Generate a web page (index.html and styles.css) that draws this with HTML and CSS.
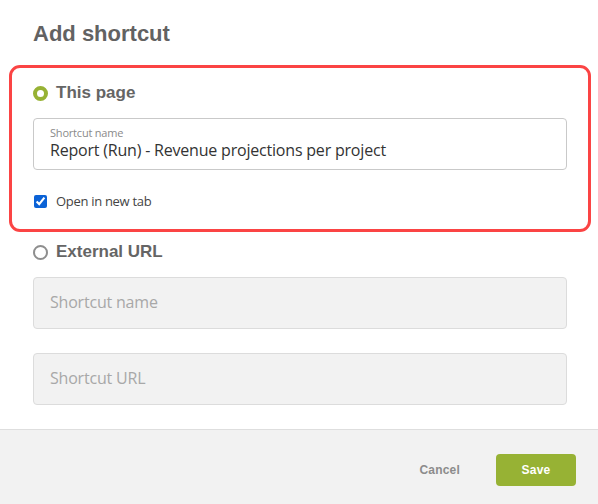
FILE: index.html
```html
<!DOCTYPE html>
<html lang="en">
<head>
<meta charset="utf-8">
<title>Add shortcut</title>
<link rel="stylesheet" href="styles.css">
</head>
<body>
<div class="dialog">
  <div class="dialog-body">
    <h1 class="title">Add shortcut</h1>

    <div class="option option-active">
      <div class="radio-row">
        <span class="radio radio-on"></span>
        <span class="radio-label">This page</span>
      </div>
      <div class="field">
        <span class="field-label">Shortcut name</span>
        <span class="field-value">Report (Run) - Revenue projections per project</span>
      </div>
      <label class="check-row">
        <input type="checkbox" class="check" checked>
        <span class="check-label">Open in new tab</span>
      </label>
    </div>

    <div class="option">
      <div class="radio-row">
        <span class="radio"></span>
        <span class="radio-label">External URL</span>
      </div>
      <div class="field field-disabled">
        <span class="placeholder">Shortcut name</span>
      </div>
      <div class="field field-disabled field-gap">
        <span class="placeholder">Shortcut URL</span>
      </div>
    </div>
  </div>

  <div class="dialog-footer">
    <button class="btn btn-cancel" type="button">Cancel</button>
    <button class="btn btn-save" type="button">Save</button>
  </div>
</div>
</body>
</html>
```

FILE: styles.css
```css
html, body {
  margin: 0;
  padding: 0;
  background: #ffffff;
}

body {
  font-family: "Liberation Sans", Arial, sans-serif;
}

.dialog {
  width: 598px;
  height: 504px;
  display: flex;
  flex-direction: column;
  background: #ffffff;
}

.dialog-body {
  flex: 1;
  padding: 21px 7px 0 9px;
}

.title {
  margin: 0 0 18px;
  padding-left: 24px;
  font-size: 22px;
  line-height: 26px;
  font-weight: bold;
  color: #626262;
}

.option {
  padding: 0 24px;
}

.option-active {
  border: 3px solid #fb4444;
  border-radius: 11px;
  padding: 15px 21px 18px;
  margin-bottom: 10px;
}

.radio-row {
  display: flex;
  align-items: center;
  gap: 8px;
  height: 20px;
}

.radio {
  box-sizing: border-box;
  width: 15px;
  height: 15px;
  border-radius: 50%;
  border: 2px solid #8e8e8e;
  background: #ffffff;
  flex: none;
}

.radio-on {
  border: 4.5px solid #97b234;
}

.radio-label {
  font-size: 17px;
  font-weight: bold;
  color: #656565;
}

.field {
  box-sizing: border-box;
  height: 52px;
  margin-top: 15px;
  border: 1px solid #c9c9c9;
  border-radius: 4px;
  padding: 7px 16px 0;
  font-family: "Open Sans", sans-serif;
  letter-spacing: -0.2px;
}

.field-label {
  display: block;
  font-size: 11px;
  line-height: 14px;
  color: #8a8a8a;
}

.field-value {
  display: block;
  font-size: 16px;
  line-height: 20px;
  color: #333333;
}

.field-disabled {
  background: #f2f2f2;
  border-color: #dcdcdc;
  padding: 0 16px 3px;
  display: flex;
  align-items: center;
}

.field-gap {
  margin-top: 24px;
}

.placeholder {
  font-size: 16px;
  line-height: 20px;
  color: #a8a8a8;
}

.check-row {
  display: flex;
  align-items: center;
  height: 20px;
  margin-top: 21px;
}

.check {
  width: 13px;
  height: 13px;
  margin: 0 9px 0 1px;
  accent-color: #0b62d6;
}

.check-label {
  font-family: "Open Sans", sans-serif;
  font-size: 13px;
  letter-spacing: -0.3px;
  color: #444444;
}

.dialog-footer {
  height: 75px;
  border-top: 1px solid #dedede;
  background: #f2f2f2;
  display: flex;
  align-items: center;
  justify-content: flex-end;
  padding: 5px 22px 0 0;
  box-sizing: border-box;
}

.btn {
  font-family: "Liberation Sans", Arial, sans-serif;
  font-size: 12px;
  font-weight: bold;
  letter-spacing: 0.2px;
  border: none;
  height: 32px;
  border-radius: 4px;
  cursor: pointer;
}

.btn-cancel {
  background: transparent;
  color: #8c8c8c;
  padding: 0 16px;
  margin-right: 20px;
}

.btn-save {
  width: 80px;
  background: #97b234;
  color: #ffffff;
}
```
